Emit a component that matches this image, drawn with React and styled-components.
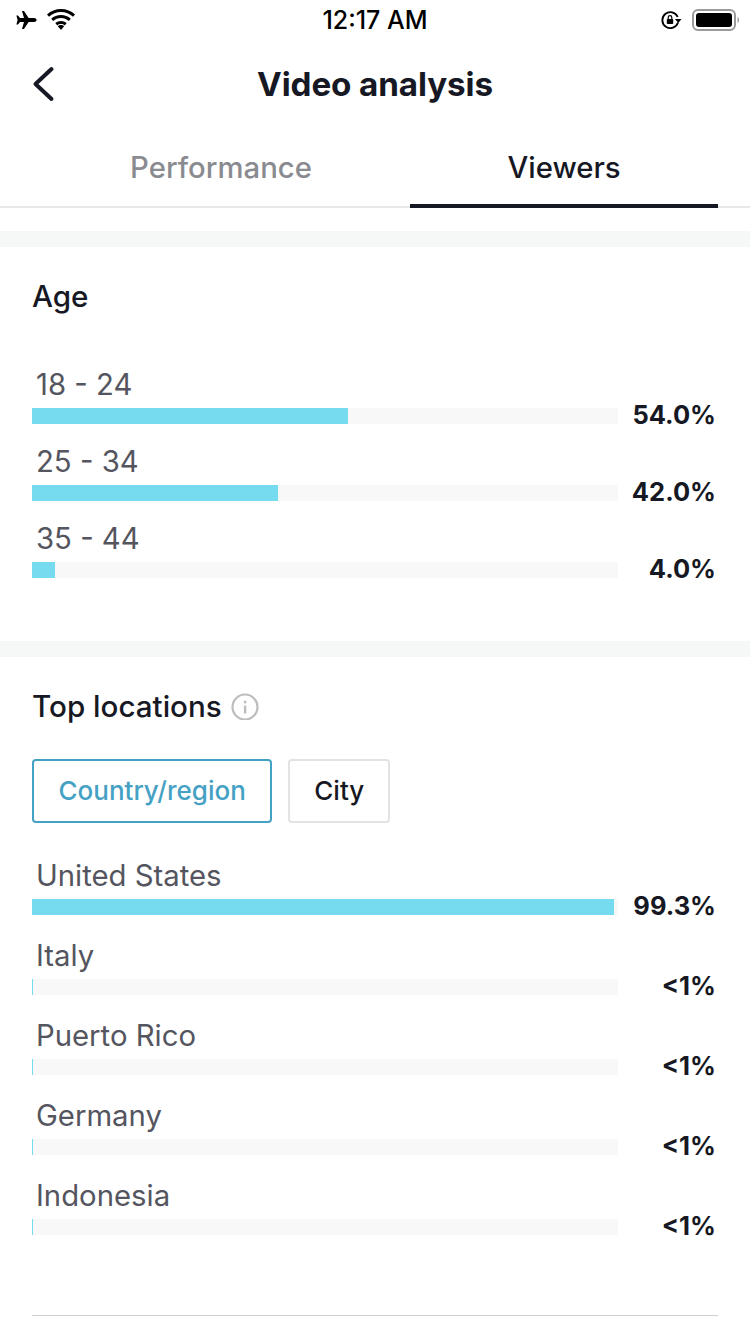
import React from "react";
import styled, { createGlobalStyle } from "styled-components";

const Global = createGlobalStyle`
  html, body { margin: 0; padding: 0; background: #fff; }
  body { font-family: Inter, "Noto Sans", sans-serif; color: #161823; }
  * { box-sizing: border-box; }
`;
const Page = styled.div`
  width: 750px; height: 1334px; overflow: hidden; background: #fff;
  display: flex; flex-direction: column;
`;
const StatusBar = styled.div`
  height: 40px; flex: none; display: grid; grid-template-columns: 1fr auto 1fr; align-items: center;
  padding: 0 10px; color: #000;
`;
const StatusGroup = styled.div`
  display: flex; align-items: center; gap: ${p => p.$gap || 8}px;
  justify-content: ${p => p.$end ? "flex-end" : "flex-start"};
  padding-left: ${p => p.$end ? 0 : 5}px;
`;
const Time = styled.div`font-size: 25px; font-weight: 500; line-height: 40px;`;
const Nav = styled.div`
  height: 88px; flex: none; display: flex; align-items: center; justify-content: center; position: relative;
`;
const Back = styled.svg`position: absolute; left: 32px; top: 26px;`;
const Title = styled.h1`margin: 0; font-size: 33.200px; font-weight: 700; letter-spacing: -0.1px; color: #161823;`;
const Tabs = styled.div`
  height: 80px; flex: none; display: grid; grid-template-columns: 378px 308px;
  padding-left: 32px; border-bottom: 2px solid #e8e8e9;
`;
const Tab = styled.div`
  display: flex; align-items: center; justify-content: center; padding-top: 3px;
  font-size: 29.300px; font-weight: 500; margin-bottom: -2px;
  color: ${p => p.$active ? "#161823" : "#8a8b91"};
  border-bottom: 4px solid ${p => p.$active ? "#161823" : "transparent"};
`;
const Band = styled.div`height: 16px; flex: none; background: #f6f7f7; margin-top: ${p => p.$top || 0}px;`;
const Section = styled.section`
  height: ${p => p.$h}px; flex: none; padding: 0 32px;
`;
const Heading = styled.h2`
  margin: 0; font-size: 29.600px; font-weight: 500; color: #161823; display: flex; align-items: center; gap: 9px;
  height: 36px; padding-top: ${p => p.$pt || 0}px; box-sizing: content-box;
`;
const Rows = styled.div`display: flex; flex-direction: column; gap: ${p => p.$gap}px; margin-top: ${p => p.$mt}px;`;
const Row = styled.div`
  display: grid; grid-template-columns: 586px 1fr; grid-template-rows: 34px 16px; row-gap: 7px;
  width: 686px;
`;
const Label = styled.div`
  grid-column: 1 / 3; padding: 1px 0 0 4px; font-size: 29.300px; line-height: 34px; height: 34px; color: #54555e; font-weight: 400;
`;
const Track = styled.div`height: 16px; background: #f8f8f8;`;
const Fill = styled.div`height: 16px; background: #76dbef;`;
const Value = styled.div`
  height: 16px; line-height: 14px; text-align: right; padding-right: 4px; margin-right: -2px; font-size: 25.500px; font-weight: 700; color: #161823;
  white-space: nowrap;
`;
const Chips = styled.div`display: flex; gap: 16px; margin-top: 35px;`;
const Chip = styled.div`
  height: 64px; padding: 0 ${p => p.$pad}px 2px; border-radius: 4px; display: flex; align-items: center;
  font-size: 26px; font-weight: 500;
  border: 2px solid ${p => p.$active ? "#45a1c4" : "#e3e3e4"};
  color: ${p => p.$active ? "#45a1c4" : "#161823"};
`;
const Divider = styled.div`height: 1px; background: #d0d0d2; margin: 0 32px;`;

const ageData = [["18 - 24", 316, "54.0%"], ["25 - 34", 246, "42.0%"], ["35 - 44", 23, "4.0%"]];
const locData = [["United States", 582, "99.3%"], ["Italy", 1, "<1%"], ["Puerto Rico", 1, "<1%"], ["Germany", 1, "<1%"], ["Indonesia", 1, "<1%"]];

const Plane = () => (
  <svg width="22" height="20" viewBox="0 0 22 20"><path fill="#000" d="M7 1h2l4.600 7H19c1.400 0 2.600.9 2.600 2s-1.200 2-2.600 2h-5.400L9 19H7l2-7H5l-2 2.500H1.400L2.600 10 1.400 5.500H3L5 8h4z" /></svg>
);
const Wifi = () => (
  <svg width="30" height="22" viewBox="0 0 30 22"><path fill="#000" d="M15 3c4.500 0 8.700 1.700 12 4.700l2-2.300C25.200 1.900 20.300 0 15 0S4.800 1.900 1 5.400l2 2.300C6.300 4.700 10.500 3 15 3z" /><path fill="#000" d="M15 9c3 0 5.600 1.100 7.800 3l2-2.300C22.100 7.300 18.700 6 15 6S7.900 7.300 5.200 9.700l2 2.300C9.400 10.100 12 9 15 9z" /><path fill="#000" d="M15 12c-2.200 0-4.100.8-5.700 2.100l2 2.300c1-.9 2.300-1.400 3.700-1.400s2.700.5 3.700 1.400l2-2.300C19.100 12.800 17.200 12 15 12z" /><path fill="#000" d="M11.800 17.200 15 21l3.200-3.800c-.8-.8-2-1.200-3.200-1.200s-2.400.4-3.200 1.200z" /></svg>
);
const Rotation = () => (
  <svg width="22" height="22" viewBox="0 0 22 22"><path fill="none" stroke="#000" strokeWidth="1.800" d="M18 13.500a8 8 0 1 1-.3-5.500" /><path fill="#000" d="M15 10h6.500l-3.200 4z" /><rect x="6.800" y="10" width="6.400" height="5" rx=".8" fill="#000" /><path fill="none" stroke="#000" strokeWidth="1.200" d="M8.200 10V8.500a1.800 1.800 0 0 1 3.600 0V10" /></svg>
);
const Battery = () => (
  <svg width="48" height="22" viewBox="0 0 48 22"><rect x="1" y="1" width="42" height="20" rx="5" fill="none" stroke="#9b9b9b" strokeWidth="2" /><rect x="4" y="4" width="36" height="14" rx="3" fill="#000" /><path d="M45.500 8v6c1-.3 1.500-1.500 1.500-3s-.5-2.700-1.500-3z" fill="#9b9b9b" /></svg>
);
const Info = () => (
  <svg width="28" height="28" viewBox="0 0 28 28"><circle cx="14" cy="15" r="12.500" fill="none" stroke="#bdbdbf" strokeWidth="2.200" /><rect x="12.900" y="13.500" width="2.400" height="8" fill="#bdbdbf" /><circle cx="14.100" cy="10" r="1.500" fill="#bdbdbf" /></svg>
);

const BarRow = ({ label, width, value }) => (
  <Row>
    <Label>{label}</Label>
    <Track><Fill style={{ width }} /></Track>
    <Value>{value}</Value>
  </Row>
);

export default function App() {
  return (
    <Page>
      <Global />
      <StatusBar>
        <StatusGroup $gap={9}><Plane /><Wifi /></StatusGroup>
        <Time>12:17 AM</Time>
        <StatusGroup $end $gap={10}><Rotation /><Battery /></StatusGroup>
      </StatusBar>
      <Nav>
        <Back width="24" height="36" viewBox="0 0 24 36"><path d="M19.500 3 3.500 18l16 15" fill="none" stroke="#161823" strokeWidth="4" strokeLinecap="round" strokeLinejoin="round" /></Back>
        <Title>Video analysis</Title>
      </Nav>
      <Tabs>
        <Tab>Performance</Tab>
        <Tab $active>Viewers</Tab>
      </Tabs>
      <Band $top={23} />
      <Section $h={394}>
        <Heading $pt={31}>Age</Heading>
        <Rows $gap={20} $mt={53}>
          {ageData.map(([l, w, v]) => <BarRow key={l} label={l} width={w} value={v} />)}
        </Rows>
      </Section>
      <Band />
      <Section $h={658}>
        <Heading $pt={31}>Top locations <Info /></Heading>
        <Chips>
          <Chip $active $pad={24.500}>Country/region</Chip>
          <Chip $pad={24}>City</Chip>
        </Chips>
        <Rows $gap={23} $mt={35}>
          {locData.map(([l, w, v]) => <BarRow key={l} label={l} width={w} value={v} />)}
        </Rows>
      </Section>
      <Divider />
    </Page>
  );
}
